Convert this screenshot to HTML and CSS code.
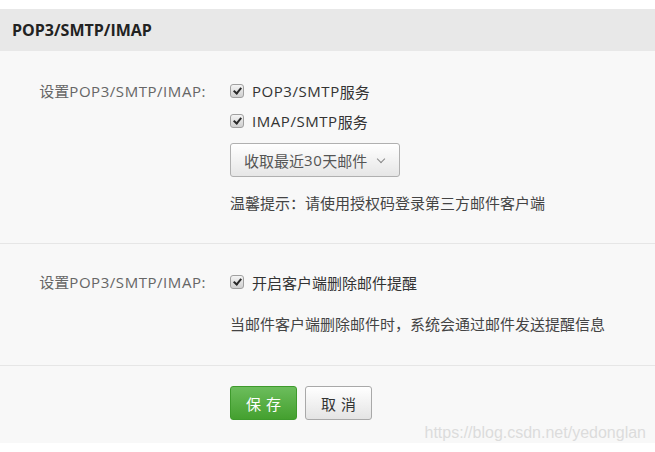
FILE: index.html
```html
<!DOCTYPE html>
<html lang="zh-CN">
<head>
  <meta charset="UTF-8" />
  <title>POP3/SMTP/IMAP</title>
  <link rel="stylesheet" href="styles.css">
</head>
<body>

<div class="panel">
  <div class="panel-head">POP3/SMTP/IMAP</div>

  <div class="panel-body">
    <div class="form-row">
      <div class="form-label">设置<span class="en">POP3/SMTP/IMAP:</span></div>
      <div class="form-field">
        <label class="check-line"><span class="check on"></span><span class="en">POP3/SMTP</span>服务</label>
        <label class="check-line"><span class="check on"></span><span class="en">IMAP/SMTP</span>服务</label>
        <button class="select-btn">收取最近<span class="en">30</span>天邮件<span class="caret"></span></button>
        <p class="tip">温馨提示：请使用授权码登录第三方邮件客户端</p>
      </div>
    </div>

    <div class="form-row row-delete">
      <div class="form-label">设置<span class="en">POP3/SMTP/IMAP:</span></div>
      <div class="form-field">
        <label class="check-line"><span class="check on"></span>开启客户端删除邮件提醒</label>
        <p class="tip">当邮件客户端删除邮件时，系统会通过邮件发送提醒信息</p>
      </div>
    </div>

    <div class="form-actions">
      <button class="btn btn-save">保存</button>
      <button class="btn btn-cancel">取消</button>
    </div>

    <div class="watermark">https://blog.csdn.net/yedonglan</div>
  </div>
</div>

</body>
</html>
```

FILE: styles.css
```css
body {
  margin: 0;
  padding: 9px 0 0;
  background: #fff;
  font-family: "Open Sans", "Noto Sans CJK SC", sans-serif;
  font-size: 15px;
  color: #333;
}

.en {
  letter-spacing: 0.55px;
}

.panel-head {
  height: 42px;
  line-height: 42px;
  padding-left: 12px;
  background: #e8e8e8;
  font-weight: bold;
  font-size: 16px;
  color: #222;
}

.panel-body {
  position: relative;
  background: #f8f8f8;
}

.form-row {
  display: flex;
  padding: 25px 0 25px;
  border-bottom: 1px solid #e6e6e6;
}

.row-delete {
  padding: 23px 0 26px;
}

.form-label {
  width: 206px;
  padding-right: 24px;
  text-align: right;
  line-height: 30px;
  color: #666;
}

.form-field {
  display: flex;
  flex-direction: column;
  align-items: flex-start;
}

.check-line {
  display: flex;
  align-items: center;
  height: 30px;
  color: #333;
}

.check {
  width: 12px;
  height: 12px;
  margin: 0 8px 0 0;
  border: 1px solid #a0a0a0;
  border-radius: 3px;
  background: linear-gradient(#f4f4f4, #cfcfcf);
  position: relative;
}

.check.on::after {
  content: "";
  position: absolute;
  left: 3.5px;
  top: 1px;
  width: 3px;
  height: 6px;
  border: solid #2a2a2a;
  border-width: 0 2px 2px 0;
  transform: rotate(40deg);
}

.select-btn {
  margin-top: 7px;
  height: 34px;
  padding: 0 14px 0 13px;
  border: 1px solid #b0b0b0;
  border-radius: 3px;
  background: linear-gradient(#ffffff, #e6e6e6);
  font: inherit;
  color: #555;
  display: flex;
  align-items: center;
}

.caret {
  width: 5px;
  height: 5px;
  margin: 0 1px 3px 11px;
  border: solid #888;
  border-width: 0 1.5px 1.5px 0;
  transform: rotate(45deg);
}

.tip {
  margin: 11px 0 0;
  line-height: 30px;
  color: #444;
}

.row-delete .tip {
  margin-top: 12px;
}

.form-actions {
  display: flex;
  gap: 8px;
  padding: 20px 0 23px 230px;
}

.btn {
  width: 67px;
  height: 34px;
  padding: 0;
  border-radius: 3px;
  font: inherit;
  font-size: 15px;
  letter-spacing: 5px;
  text-indent: 5px;
  cursor: pointer;
}

.btn-save {
  border: 1px solid #3e9a2c;
  background: linear-gradient(#6cbd5c, #44a02f);
  color: #fff;
}

.btn-cancel {
  border: 1px solid #a9a9a9;
  background: linear-gradient(#ffffff, #e4e4e4);
  color: #333;
}

.watermark {
  position: absolute;
  right: 9px;
  bottom: 1px;
  font-family: "Liberation Sans", Arial, sans-serif;
  font-size: 16px;
  color: #dcdcdc;
}
```
